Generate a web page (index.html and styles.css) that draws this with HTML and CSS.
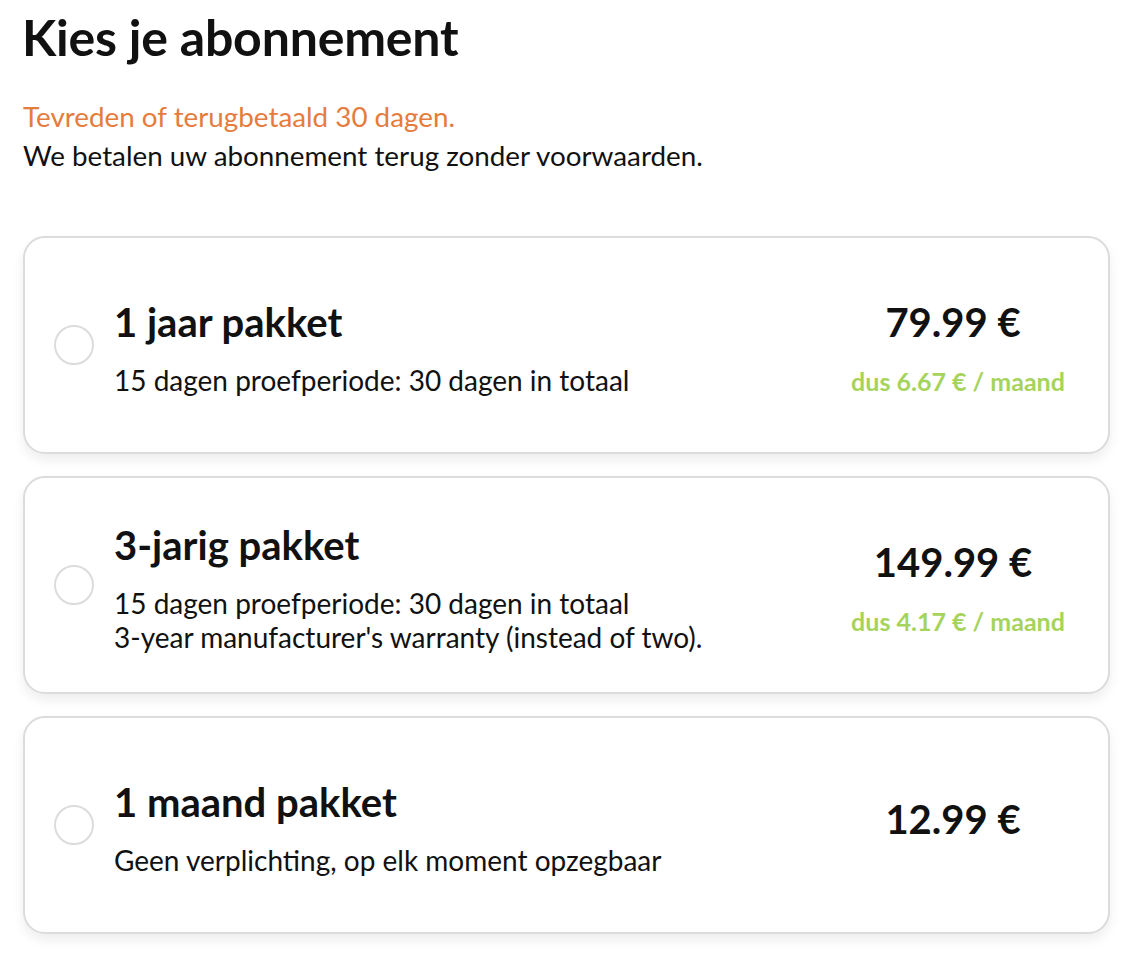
FILE: index.html
```html
<!DOCTYPE html>
<html lang="nl">
<head>
<meta charset="utf-8">
<title>Kies je abonnement</title>
<link rel="stylesheet" href="styles.css">
</head>
<body>
<main class="page">
  <h1 class="title">Kies je abonnement</h1>
  <p class="guarantee">Tevreden of terugbetaald 30 dagen.</p>
  <p class="intro">We betalen uw abonnement terug zonder voorwaarden.</p>

  <div class="plans">
    <label class="plan">
      <span class="radio"></span>
      <div class="info">
        <div class="plan-name">1 jaar pakket</div>
        <div class="plan-desc">15 dagen proefperiode: 30 dagen in totaal</div>
      </div>
      <div class="pricing">
        <div class="price">79.99 €</div>
        <div class="monthly">dus 6.67 € / maand</div>
      </div>
    </label>

    <label class="plan">
      <span class="radio"></span>
      <div class="info">
        <div class="plan-name">3-jarig pakket</div>
        <div class="plan-desc">15 dagen proefperiode: 30 dagen in totaal<br>3-year manufacturer's warranty (instead of two).</div>
      </div>
      <div class="pricing">
        <div class="price">149.99 €</div>
        <div class="monthly">dus 4.17 € / maand</div>
      </div>
    </label>

    <label class="plan">
      <span class="radio"></span>
      <div class="info">
        <div class="plan-name">1 maand pakket</div>
        <div class="plan-desc">Geen verplichting, op elk moment opzegbaar</div>
      </div>
      <div class="pricing">
        <div class="price">12.99 €</div>
      </div>
    </label>
  </div>
</main>
</body>
</html>
```

FILE: styles.css
```css
* { box-sizing: border-box; }

html, body {
  margin: 0;
  padding: 0;
  background: #ffffff;
}

body {
  font-family: Lato, "Liberation Sans", sans-serif;
  color: #111111;
}

.page {
  padding: 7px 26px 20px 23px;
}

.title {
  margin: 0 0 0 -1px;
  font-size: 50px;
  line-height: 60px;
  font-weight: 700;
  letter-spacing: -0.2px;
}

.guarantee {
  margin: 30px 0 0;
  font-size: 27.8px;
  line-height: 39px;
  color: #e57b3c;
}

.intro {
  margin: 0;
  font-size: 27.8px;
  line-height: 39px;
  color: #111111;
}

.plans {
  margin-top: 61px;
  display: flex;
  flex-direction: column;
  gap: 22px;
}

.plan {
  display: flex;
  align-items: center;
  height: 218px;
  border: 2px solid #dcdcdc;
  border-radius: 22px;
  background: #fff;
  box-shadow: 0 6px 12px rgba(0, 0, 0, 0.07);
  padding: 0 0 0 29px;
  cursor: pointer;
}

.radio {
  flex: none;
  width: 40px;
  height: 40px;
  border: 2px solid #dcdcdc;
  border-radius: 50%;
  background: #fff;
}

.info {
  flex: 1;
  padding: 5px 0 0 20px;
}

.plan-name {
  font-size: 40px;
  line-height: 48px;
  font-weight: 700;
  color: #111;
}

.plan-desc {
  margin-top: 17px;
  font-size: 28px;
  line-height: 34px;
  color: #111;
}

.pricing {
  flex: none;
  width: 300px;
  padding-top: 5px;
  text-align: center;
}

.price {
  margin-bottom: 18px;
  padding-right: 10px;
  font-size: 40px;
  line-height: 48px;
  font-weight: 700;
  color: #111;
}

.monthly {
  font-size: 25px;
  line-height: 34px;
  font-weight: 700;
  color: #a6d45a;
}
```
